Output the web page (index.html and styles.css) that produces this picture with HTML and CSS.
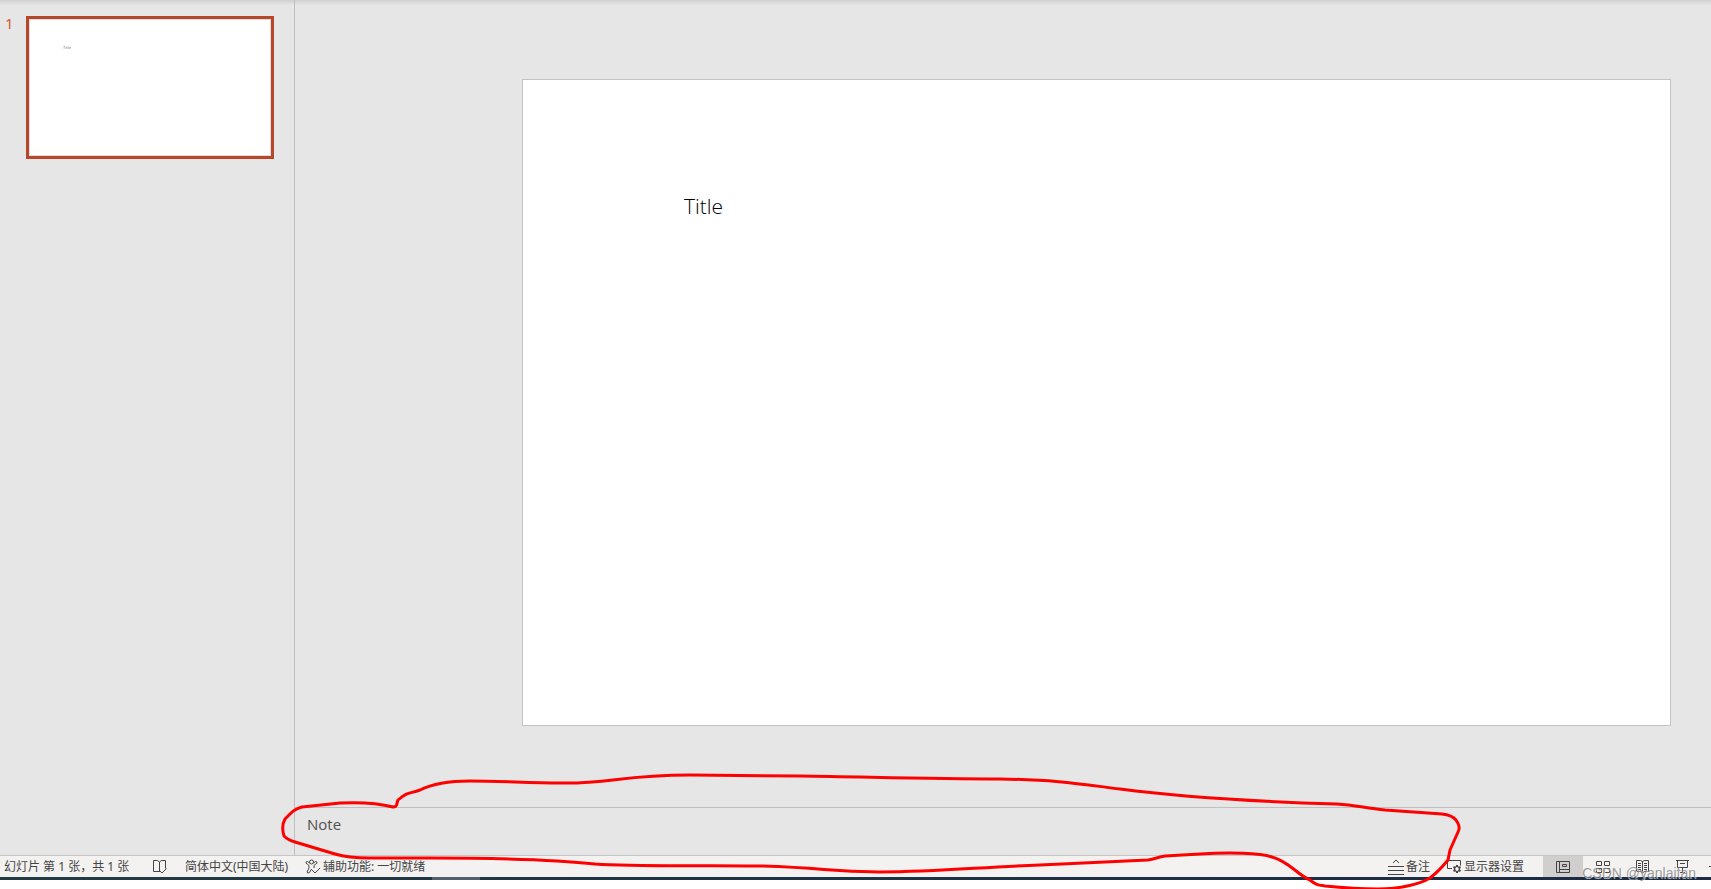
FILE: index.html
```html
<!doctype html>
<html lang="zh-CN">
<head>
    <meta charset="utf-8">
    <title>演示文稿</title>
    <link rel="stylesheet" href="styles.css">
</head>
<body>
    <div class="app">
        <div class="main">
            <!-- 左侧缩略图 -->
            <div class="side">
                <span class="num">1</span>
                <button class="thumb" type="button" aria-label="幻灯片 1"><span>Title</span></button>
            </div>
            <div class="editor">
                <div class="canvas">
                    <div class="slide">
                        <h1>Title</h1>
                    </div>
                </div>
                <textarea class="notes" aria-label="备注">Note</textarea>
            </div>
        </div>

        <!-- 状态栏 -->
        <div class="status">
            <div class="info">
                <span class="count">幻灯片 第 1 张，共 1 张</span>
                <button class="spell" type="button" aria-label="拼写检查">
                    <svg width="14" height="14" viewBox="0 0 14 14"><path d="M7.500 11.500h-7v-11h4l2 1.500 2-1.500h4v8M6.500 2v9M6.500 10.500l2.500 2.500 4.500-4.500"/></svg>
                </button>
                <button class="lang" type="button">简体中文(中国大陆)</button>
                <button class="access" type="button">
                    <svg width="16" height="16" viewBox="0 0 16 16"><circle cx="6.500" cy="3" r="2"/><path d="M4.500 4L2.500 2.500Q.5 2.500 1 4L4 6.500V9L2 13Q2.500 15 4.500 13.500L6.500 10M8.500 4L10.500 2.500Q12.500 2.500 12 4L9 6.500V9M7 11l3 3 5-5"/></svg>
                    <span>辅助功能: 一切就绪</span>
                </button>
            </div>
            <div class="tools">
                <button class="note-btn" type="button">
                    <svg width="16" height="16" viewBox="0 0 16 16"><path d="M5 4l3-3 3 3M0 7.500h16M0 11.500h16M0 15.500h16"/></svg>
                    <span>备注</span>
                </button>
                <button class="display-btn" type="button">
                    <svg width="15" height="15" viewBox="0 0 15 15"><path d="M5 9.500H.5v-8h13v5"/><path stroke-width="2" d="M10 6v2M10 12v2M6.500 8l2 1M11.500 11l2 1M6.500 12l2-1M11.500 9l2-1"/><circle cx="10" cy="10" r="2.500"/></svg>
                    <span>显示器设置</span>
                </button>
                <button class="view on" type="button" aria-label="普通视图">
                    <svg width="14" height="12" viewBox="0 0 14 12"><path d="M.5.500h13v11H.5zM3.500.500v11M3.500 8.500h10M6.500 3.500h4v2h-4z"/></svg>
                </button>
                <button class="view" type="button" aria-label="幻灯片浏览">
                    <svg width="14" height="12" viewBox="0 0 14 12"><path d="M.5.500h5v4h-5zM8.500.500h5v4h-5zM.5 7.500h5v4h-5zM8.500 7.500h5v4h-5z"/></svg>
                </button>
                <button class="view" type="button" aria-label="阅读视图">
                    <svg width="14" height="14" viewBox="0 0 14 14"><path d="M.5.500h4l2 1 2-1h4v11h-4l-2 1.500-2-1.500h-4zM6.500 1v12M2 3.500h3M2 5.500h3M2 7.500h3M2 9.500h3M8 3.500h3M8 5.500h3M8 7.500h3M8 9.500h3"/></svg>
                </button>
                <button class="view" type="button" aria-label="幻灯片放映">
                    <svg width="14" height="14" viewBox="0 0 14 14"><path d="M0 .5h13M1.500.500v7h10v-7M4 3.500h5M6.500 7.500v5M4 12.500h5"/></svg>
                </button>
                <button class="zoom-out" type="button" aria-label="缩小"></button>
            </div>
        </div>
        <div class="taskbar"><span></span></div>

        <!-- 手绘红圈 -->
        <svg class="mark" viewBox="0 769 1711 119" preserveAspectRatio="none">
            <path d="M393 806C378 802 360 801 340 802L302 806Q295 808 291 812L285 818Q281 825 284 835Q288 839 295 841L315 847L335 853Q348 857 370 857L430 857C500 857 560 859 595 863C640 866 700 864 760 865C830 867 825 871 880 871C940 871 980 866 1040 864L1148 859C1155 858 1158 856 1165 855L1200 853C1230 851 1260 852 1272 856C1290 861 1296 873 1310 879C1316 884 1318 884 1325 885C1345 887 1360 888 1378 888C1400 888 1420 883 1430 877Q1438 871 1448 859L1450 849L1458 831Q1461 826 1456 819Q1452 814 1442 813L1385 809C1365 807 1355 804 1337 803C1270 801 1180 796 1120 788C1080 783 1060 779 1000 778C930 778 870 776 800 775L690 774C620 774 610 783 560 782C530 782 500 780 470 780C445 780 430 784 420 789C410 793 408 790 398 799C396 803 398 806 393 806Z"/>
        </svg>
        <span class="watermark">CSDN @yanlaifan</span>
    </div>
</body>
</html>
```

FILE: styles.css
```css
* {
    box-sizing: border-box;
}

body {
    margin: 0;
    font-family: "Noto Sans", "Noto Sans CJK SC", sans-serif;
    background: #fff;
}

button {
    padding: 0;
    border: 0;
    background: none;
    color: inherit;
    font: inherit;
}

.app {
    position: relative;
    display: flex;
    flex-direction: column;
    height: 100vh;
    padding-bottom: 9px;
    overflow: hidden;
}

.main {
    display: flex;
    flex: 1;
    min-height: 0;
    background: linear-gradient(#cfcfcf, #e6e6e6 5px);
}

.side {
    display: flex;
    align-items: flex-start;
    width: 295px;
    padding: 16px 20px 0 5px;
    border-right: 1px solid #bfbfbf;
}

.num {
    width: 21px;
    font-size: 15px;
    line-height: 14px;
    color: #d6593c;
}

.thumb {
    display: flex;
    flex: 1;
    height: 143px;
    padding: 25px 0 0 34px;
    border: 3px solid #b7472a;
    background: #fff;
    box-shadow: inset 0 0 0 1px #dedede;
    font-size: 4px;
    line-height: 7px;
    color: #777;
}

.editor {
    display: flex;
    flex: 1;
    flex-direction: column;
}

.canvas {
    display: flex;
    flex: 1;
    padding: 79px 40px 81px 227px;
}

.slide {
    flex: 1;
    padding: 111px 161px;
    border: 1px solid #c4c4c4;
    background: #fff;
}

.slide h1 {
    margin: 0;
    font-family: "Open Sans", sans-serif;
    font-size: 21px;
    font-weight: 300;
    line-height: 30px;
    color: #000;
}

.notes {
    height: 48px;
    padding: 6px 12px;
    border: 0;
    border-top: 1px solid #bfbfbf;
    outline: 0;
    resize: none;
    background: none;
    font-family: "Open Sans", sans-serif;
    font-size: 15px;
    line-height: 20px;
    color: #505050;
}

.status {
    display: flex;
    justify-content: space-between;
    height: 22px;
    border-top: 1px solid #c6c6c6;
    background: #f3f2f1;
    font-size: 12px;
    line-height: 20px;
    color: #444;
    white-space: nowrap;
}

.status svg {
    flex: none;
    fill: none;
    stroke: #444;
}

.status button {
    display: flex;
    align-items: center;
}

.info {
    display: flex;
    align-items: center;
    padding: 1px 0 0 4px;
}

.count {
    width: 149px;
    word-spacing: normal;
}

.lang {
    width: 120px;
    margin-left: 18px;
}

.access {
    gap: 2px;
}

.tools {
    display: flex;
}

.note-btn {
    gap: 2px;
    margin-right: 17px;
}

.display-btn {
    gap: 2px;
    margin-right: 19px;
}

.status .view {
    justify-content: center;
    width: 40px;
}

.status .on {
    background: #d0cfce;
}

.zoom-out {
    width: 8px;
}

.zoom-out::after {
    content: "";
    width: 2px;
    height: 1px;
    margin-left: 6px;
    background: #444;
}

.taskbar {
    height: 3px;
    padding-left: 432px;
    background: linear-gradient(90deg, #213b43, #1c2b45);
}

.taskbar span {
    display: block;
    width: 48px;
    height: 3px;
    background: #526068;
}

.mark {
    position: absolute;
    left: 0;
    bottom: 0;
    width: 100%;
    height: 119px;
    fill: none;
    stroke: #f00;
    stroke-width: 3;
    stroke-linejoin: round;
    pointer-events: none;
}

.watermark {
    position: absolute;
    right: 15px;
    bottom: 7px;
    font-family: "Liberation Sans", Arial, sans-serif;
    font-size: 14px;
    line-height: 18px;
    color: rgba(130, 130, 130, .8);
    text-shadow: 1px 1px 0 rgba(255, 255, 255, .6);
}
```
